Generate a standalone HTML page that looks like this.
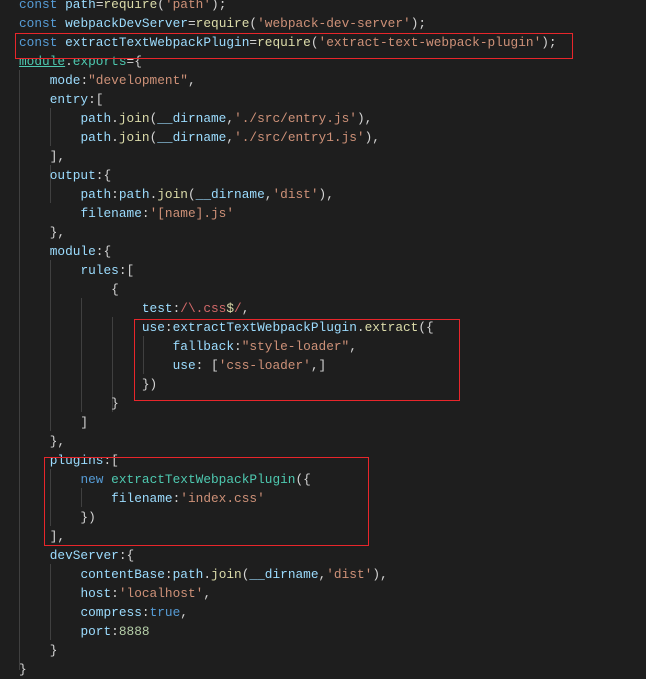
<!DOCTYPE html>
<html><head><meta charset="utf-8"><style>
body{margin:0;width:646px;height:668px;background:#1e1e1e;overflow:hidden;position:relative;font-family:"Liberation Mono",monospace;font-size:12.8px;}
.l{position:absolute;left:19px;height:19px;line-height:19px;white-space:pre;color:#d4d4d4}
.k{color:#569cd6}.v{color:#9cdcfe}.s{color:#ce9178}.f{color:#dcdcaa}.t{color:#4ec9b0}.r{color:#d16969}.n{color:#b5cea8}
.g{position:absolute;width:1px;background:#404040}
.b{position:absolute;border:1px solid #e8262b}
</style></head><body>
<div class="g" style="left:19px;top:70px;height:600px"></div>
<div class="g" style="left:50px;top:108px;height:38px"></div>
<div class="g" style="left:50px;top:165px;height:38px"></div>
<div class="g" style="left:50px;top:260px;height:171px"></div>
<div class="g" style="left:81px;top:298px;height:114px"></div>
<div class="g" style="left:112px;top:317px;height:95px"></div>
<div class="g" style="left:143px;top:336px;height:38px"></div>
<div class="g" style="left:50px;top:469px;height:57px"></div>
<div class="g" style="left:81px;top:488px;height:19px"></div>
<div class="g" style="left:50px;top:564px;height:76px"></div>

<div class="l" style="top:-5.5px"><span class="k">const</span> <span class="v">path</span>=<span class="f">require</span>(<span class="s">'path'</span>);</div>
<div class="l" style="top:13.5px"><span class="k">const</span> <span class="v">webpackDevServer</span>=<span class="f">require</span>(<span class="s">'webpack-dev-server'</span>);</div>
<div class="l" style="top:32.5px"><span class="k">const</span> <span class="v">extractTextWebpackPlugin</span>=<span class="f">require</span>(<span class="s">'extract-text-webpack-plugin'</span>);</div>
<div class="l" style="top:51.5px"><span class="t" style="text-decoration:underline">module</span>.<span class="t">exports</span>={</div>
<div class="l" style="top:70.5px">    <span class="v">mode</span>:<span class="s">"development"</span>,</div>
<div class="l" style="top:89.5px">    <span class="v">entry</span>:[</div>
<div class="l" style="top:108.5px">        <span class="v">path</span>.<span class="f">join</span>(<span class="v">__dirname</span>,<span class="s">'./src/entry.js'</span>),</div>
<div class="l" style="top:127.5px">        <span class="v">path</span>.<span class="f">join</span>(<span class="v">__dirname</span>,<span class="s">'./src/entry1.js'</span>),</div>
<div class="l" style="top:146.5px">    ],</div>
<div class="l" style="top:165.5px">    <span class="v">output</span>:{</div>
<div class="l" style="top:184.5px">        <span class="v">path</span>:<span class="v">path</span>.<span class="f">join</span>(<span class="v">__dirname</span>,<span class="s">'dist'</span>),</div>
<div class="l" style="top:203.5px">        <span class="v">filename</span>:<span class="s">'[name].js'</span></div>
<div class="l" style="top:222.5px">    },</div>
<div class="l" style="top:241.5px">    <span class="v">module</span>:{</div>
<div class="l" style="top:260.5px">        <span class="v">rules</span>:[</div>
<div class="l" style="top:279.5px">            {</div>
<div class="l" style="top:298.5px">                <span class="v">test</span>:<span class="r">/\.css</span><span class="f">$</span><span class="r">/</span>,</div>
<div class="l" style="top:317.5px">                <span class="v">use</span>:<span class="v">extractTextWebpackPlugin</span>.<span class="f">extract</span>({</div>
<div class="l" style="top:336.5px">                    <span class="v">fallback</span>:<span class="s">"style-loader"</span>,</div>
<div class="l" style="top:355.5px">                    <span class="v">use</span>: [<span class="s">'css-loader'</span>,]</div>
<div class="l" style="top:374.5px">                })</div>
<div class="l" style="top:393.5px">            }</div>
<div class="l" style="top:412.5px">        ]</div>
<div class="l" style="top:431.5px">    },</div>
<div class="l" style="top:450.5px">    <span class="v">plugins</span>:[</div>
<div class="l" style="top:469.5px">        <span class="k">new</span> <span class="t">extractTextWebpackPlugin</span>({</div>
<div class="l" style="top:488.5px">            <span class="v">filename</span>:<span class="s">'index.css'</span></div>
<div class="l" style="top:507.5px">        })</div>
<div class="l" style="top:526.5px">    ],</div>
<div class="l" style="top:545.5px">    <span class="v">devServer</span>:{</div>
<div class="l" style="top:564.5px">        <span class="v">contentBase</span>:<span class="v">path</span>.<span class="f">join</span>(<span class="v">__dirname</span>,<span class="s">'dist'</span>),</div>
<div class="l" style="top:583.5px">        <span class="v">host</span>:<span class="s">'localhost'</span>,</div>
<div class="l" style="top:602.5px">        <span class="v">compress</span>:<span class="k">true</span>,</div>
<div class="l" style="top:621.5px">        <span class="v">port</span>:<span class="n">8888</span></div>
<div class="l" style="top:640.5px">    }</div>
<div class="l" style="top:659.5px">}</div>

<div class="b" style="left:15px;top:33px;width:556px;height:24px"></div>
<div class="b" style="left:134px;top:319px;width:324px;height:80px"></div>
<div class="b" style="left:44px;top:457px;width:323px;height:87px"></div>
</body></html>
